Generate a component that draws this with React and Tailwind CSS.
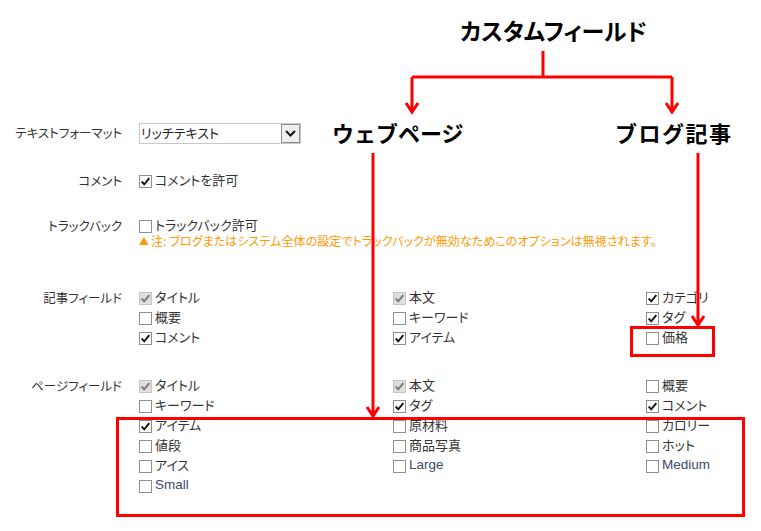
const FONT = '"Noto Sans CJK JP", "Liberation Sans", sans-serif';

const Checkbox = ({ checked, disabled }) => (
    <span className={`w-[13px] h-[13px] shrink-0 border flex items-center justify-center ${disabled ? 'border-[#c4c4c4] bg-[#dedede]' : 'border-[#8e8f8f] bg-white'}`}>
        {checked && (
            <svg viewBox="0 0 13 13" className="w-[13px] h-[13px]">
                <path d="M2 6.5 L5 9.8 L11 2.5" fill="none" stroke={disabled ? '#777' : '#111'} strokeWidth="2.2" />
            </svg>
        )}
    </span>
);

const Field = ({ label, checked, disabled }) => (
    <div className="h-5 flex items-center gap-[3px] text-[13px] text-[#333] leading-none">
        <Checkbox checked={checked} disabled={disabled} />
        <span className={`pb-[3px] ${/^[A-Za-z]/.test(label) ? 'text-[#3a4a6a] font-["Liberation_Sans"] text-[13.5px]' : ''}`}>{label}</span>
    </div>
);

const Section = ({ label, className, children }) => (
    <div className={`flex ${className}`}>
        <div className="w-[122px] mr-[17px] text-right text-[12.5px] leading-5 text-[#333] shrink-0">{label}</div>
        <div className="flex-1">{children}</div>
    </div>
);

const FieldGrid = ({ columns }) => (
    <div className="grid grid-cols-[254px_253px_1fr]">
        {columns.map((col, i) => (
            <div key={i}>
                {col.map(f => <Field key={f.label} {...f} />)}
            </div>
        ))}
    </div>
);

const articleFields = [
    [{ label: 'タイトル', checked: true, disabled: true }, { label: '概要' }, { label: 'コメント', checked: true }],
    [{ label: '本文', checked: true, disabled: true }, { label: 'キーワード' }, { label: 'アイテム', checked: true }],
    [{ label: 'カテゴリ', checked: true }, { label: 'タグ', checked: true }, { label: '価格' }],
];

const pageFields = [
    [{ label: 'タイトル', checked: true, disabled: true }, { label: 'キーワード' }, { label: 'アイテム', checked: true }, { label: '値段' }, { label: 'アイス' }, { label: 'Small' }],
    [{ label: '本文', checked: true, disabled: true }, { label: 'タグ', checked: true }, { label: '原材料' }, { label: '商品写真' }, { label: 'Large' }],
    [{ label: '概要' }, { label: 'コメント', checked: true }, { label: 'カロリー' }, { label: 'ホット' }, { label: 'Medium' }],
];

const Annotations = () => (
    <svg className="absolute inset-0 pointer-events-none" width="761" height="531" viewBox="0 0 761 531" fill="none" stroke="#ff0000" strokeWidth="3">
        <path d="M543 51 V77 M412 77 H672 M412 77 V112 M672 77 V112" />
        <path d="M406 103 L412 112 L418 103 M666 103 L672 112 L678 103" />
        <path d="M373 153 V416 M367 407 L373 416 L379 407" />
        <path d="M698 153 V325 M692 316 L698 325 L704 316" />
        <rect x="631.5" y="327.5" width="82" height="28" />
        <rect x="117.5" y="418.5" width="626" height="97" />
    </svg>
);

export default function App() {
    return (
        <div className="relative w-[761px] h-[531px] bg-white overflow-hidden [font-feature-settings:'palt']" style={{ fontFamily: FONT }}>
            <div className="pt-[123px]">
                <Section label="テキストフォーマット" className="h-[21px]">
                    <div className="w-[162px] h-[21px] border border-[#c3c9c9] flex items-center justify-between text-[13px] text-[#222] pl-[1px]">
                        <span className="pb-[2px]">リッチテキスト</span>
                        <span className="w-[19px] h-[19px] bg-[#efefef] border border-[#8e8f8f] flex items-center justify-center">
                            <svg viewBox="0 0 13 9" className="w-[13px] h-[9px]">
                                <path d="M2 2 L6.5 6.5 L11 2" fill="none" stroke="#111" strokeWidth="2" />
                            </svg>
                        </span>
                    </div>
                </Section>
                <Section label="コメント" className="mt-[27px]">
                    <Field label="コメントを許可" checked />
                </Section>
                <Section label="トラックバック" className="mt-[25px]">
                    <Field label="トラックバック許可" />
                    <div className="h-[10px] flex items-center gap-[2px] text-[12px] leading-none text-[#f90] whitespace-nowrap tracking-[0.08px]">
                        <span className="text-[10px]">▲</span>
                        <span>注: ブログまたはシステム全体の設定でトラックバックが無効なためこのオプションは無視されます。</span>
                    </div>
                </Section>
                <Section label="記事フィールド" className="mt-[42px]">
                    <FieldGrid columns={articleFields} />
                </Section>
                <Section label="ページフィールド" className="mt-[28px]">
                    <FieldGrid columns={pageFields} />
                </Section>
            </div>

            {/* callouts drawn over the form */}
            <Annotations />
            <div className="absolute left-[460px] top-[14px] text-[23px] leading-8 font-bold text-black whitespace-nowrap">カスタムフィールド</div>
            <div className="absolute left-[332px] top-[116px] text-[22px] leading-8 font-bold text-black whitespace-nowrap [font-feature-settings:normal]">ウェブページ</div>
            <div className="absolute left-[615px] top-[116px] text-[22px] leading-8 font-bold text-black whitespace-nowrap [font-feature-settings:normal] tracking-[1.5px]">ブログ記事</div>
        </div>
    );
}
